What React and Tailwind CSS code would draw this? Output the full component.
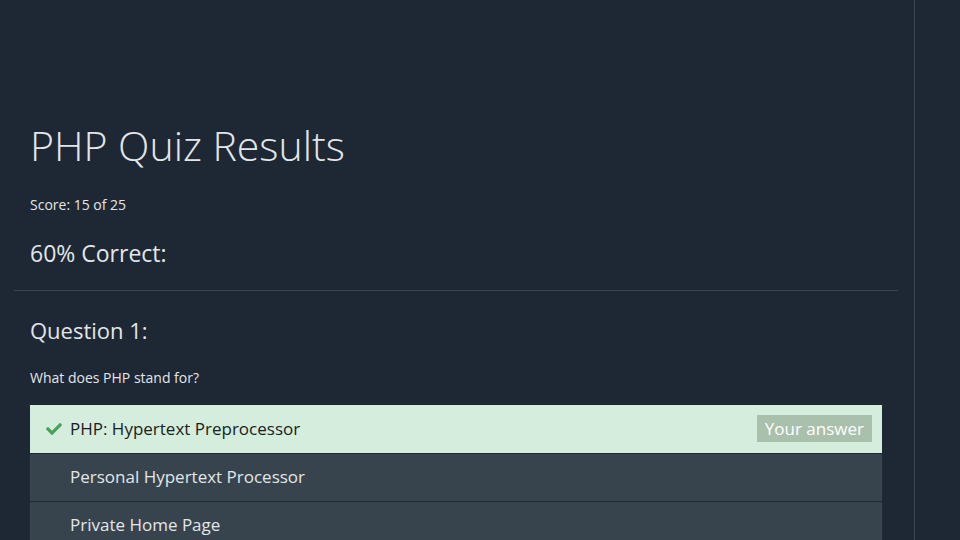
import { FaCheck } from "react-icons/fa";

const answers = [
  { text: "PHP: Hypertext Preprocessor", correct: true, chosen: true },
  { text: "Personal Hypertext Processor" },
  { text: "Private Home Page" },
];

function AnswerRow({ answer }) {
  if (answer.correct) {
    return (
      <div className="flex items-center h-[48px] bg-[#d4eddc] text-[#1a1d21] pl-[16px] pr-[10px]">
        <FaCheck className="text-[#47a25a] w-[16px] h-[16px] mr-[8px]" />
        <span className="text-[17px]">{answer.text}</span>
        {answer.chosen && (
          <span className="ml-auto bg-[#a9c0ad] text-white text-[17px] leading-[27px] px-[8px]">
            Your answer
          </span>
        )}
      </div>
    );
  }
  return (
    <div className="flex items-center h-[48px] bg-[#37444e] text-[#e3e6e8] pl-[40px] border-t border-[#1f2935]">
      <span className="text-[17px]">{answer.text}</span>
    </div>
  );
}

export default function App() {
  return (
    <div className="flex h-[540px] overflow-hidden bg-[#1e2835] font-['Open_Sans',sans-serif] text-[#e3e6e8]">
      <div className="w-[915px] border-r border-[#3a4551] pl-[14px] pr-[16px] pt-[121px]">
        <div className="px-[16px] pb-[19px]">
          <h1 className="text-[41px] leading-[48px] font-light">PHP Quiz Results</h1>
          <p className="text-[14px] mt-[25px]">Score: 15 of 25</p>
          <h2 className="text-[23px] mt-[21px]">60% Correct:</h2>
        </div>
        <div className="border-t border-[#3a4551]" />
        <div className="px-[16px] pt-[23px]">
          <h2 className="text-[22px]">Question 1:</h2>
          <p className="text-[14px] mt-[20px]">What does PHP stand for?</p>
          <div className="mt-[17px]">
            {answers.map((a) => (
              <AnswerRow key={a.text} answer={a} />
            ))}
          </div>
        </div>
      </div>
      <div className="flex-1" />
    </div>
  );
}
